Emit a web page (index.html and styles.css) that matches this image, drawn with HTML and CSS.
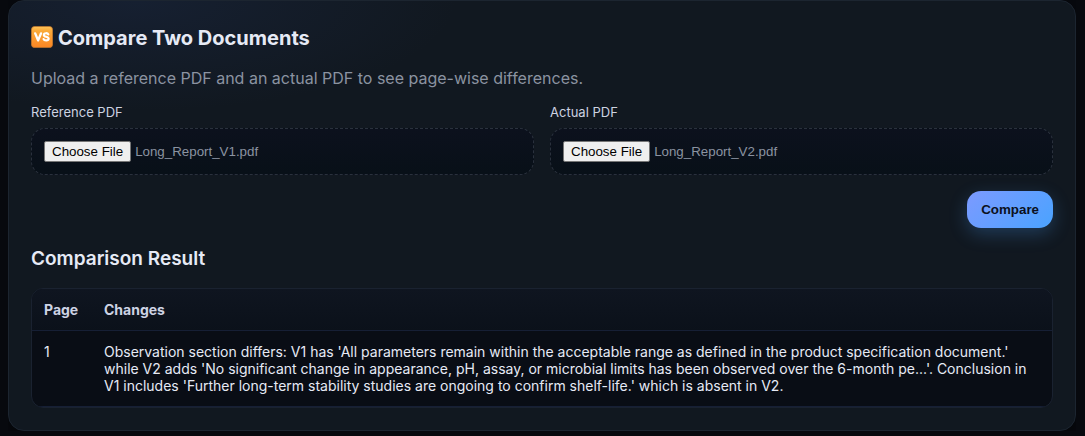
FILE: index.html
```html
<!DOCTYPE html>
<html lang="en">
<head>
<meta charset="utf-8">
<meta name="viewport" content="width=device-width, initial-scale=1">
<title>Compare Two Documents</title>
<link rel="stylesheet" href="styles.css">
</head>
<body>
<main class="card">
  <h2 class="title">
    <svg class="title-icon" viewBox="0 0 22 22" aria-hidden="true">
      <defs>
        <linearGradient id="badge" x1="0" y1="0" x2="0" y2="1">
          <stop offset="0" stop-color="#ffc65a"/>
          <stop offset="0.2" stop-color="#fbab3a"/>
          <stop offset="1" stop-color="#fb8523"/>
        </linearGradient>
      </defs>
      <rect x="0.4" y="0.4" width="21.2" height="21.2" rx="3.4" fill="url(#badge)" stroke="#c97a2c" stroke-width="0.7"/>
      <path d="M4.2 7.4 7.1 14.4 10 7.4" fill="none" stroke="#fff" stroke-width="2.4" stroke-linecap="round" stroke-linejoin="round"/>
      <path d="M17.3 8.4C16.7 6.8 12.9 6.7 12.9 8.9C12.9 11.4 17.6 10.2 17.6 12.7C17.5 15 13.3 14.9 12.6 13.1" fill="none" stroke="#fff" stroke-width="2.2" stroke-linecap="round"/>
    </svg>
    <span>Compare Two Documents</span>
  </h2>
  <p class="lead">Upload a reference PDF and an actual PDF to see page-wise differences.</p>
  <form class="compare-form">
    <div class="fields">
      <div class="field">
        <label class="field-label" for="reference">Reference PDF</label>
        <input class="file-input" id="reference" type="file" accept=".pdf" data-filename="Long_Report_V1.pdf">
      </div>
      <div class="field">
        <label class="field-label" for="actual">Actual PDF</label>
        <input class="file-input" id="actual" type="file" accept=".pdf" data-filename="Long_Report_V2.pdf">
      </div>
    </div>
    <button class="compare-button" type="button">Compare</button>
  </form>
  <h3 class="subtitle">Comparison Result</h3>
  <div class="table-wrap">
    <table class="results">
      <thead>
        <tr><th scope="col">Page</th><th scope="col">Changes</th></tr>
      </thead>
      <tbody>
        <tr>
          <td>1</td>
          <td>Observation section differs: V1 has 'All parameters remain within the acceptable range as defined in the product specification document.' while V2 adds 'No significant change in appearance, pH, assay, or microbial limits has been observed over the 6-month pe...'. Conclusion in V1 includes 'Further long-term stability studies are ongoing to confirm shelf-life.' which is absent in V2.</td>
        </tr>
      </tbody>
    </table>
  </div>
</main>
<script src="script.js"></script>
</body>
</html>
```

FILE: styles.css
```css
* {
  box-sizing: border-box;
}

body {
  margin: 0 9px 0 8px;
  background: #07090e;
  color: #e6eaf5;
  font-family: Inter, "Liberation Sans", sans-serif;
}

.card {
  padding: 22px;
  border: 1px solid #1c2530;
  border-radius: 16px;
  background:
    radial-gradient(ellipse 320px 110px at 12% 0, rgba(40, 60, 110, 0.22), transparent),
    #111820;
  box-shadow: 0 10px 30px rgba(0, 0, 0, 0.35);
}

.title {
  display: flex;
  align-items: center;
  gap: 5px;
  margin: 0 0 15px;
  font-size: 20px;
  line-height: 30px;
  font-weight: 700;
}

.title-icon {
  width: 22px;
  height: 22px;
  margin-bottom: 2px;
}

.lead {
  margin: 0 0 16px;
  color: #8b93a1;
  font-size: 16px;
  line-height: 20px;
}

.compare-form {
  display: flex;
  flex-direction: column;
  gap: 16px;
}

.fields {
  display: grid;
  grid-template-columns: 1fr 1fr;
  gap: 16px;
}

.field {
  display: flex;
  flex-direction: column;
  gap: 8px;
  min-width: 0;
}

.field-label {
  color: #cdd3e0;
  font-size: 13px;
  line-height: 16px;
}

.file-input {
  width: 100%;
  padding: 12px;
  border: 1px dashed #2a313d;
  border-radius: 14px;
  background: linear-gradient(#0c111d, #081018);
  color: #8b93a1;
}

.file-input::file-selector-button {
  margin: 0 4px 0 0;
  padding: 2px 7px;
  border: 1px solid #767676;
  border-radius: 2px;
  background: #efefef;
  color: #000;
  font: inherit;
}

.compare-button {
  align-self: flex-end;
  padding: 10px 14px;
  border: 0;
  border-radius: 14px;
  background: linear-gradient(135deg, #7c9aff, #4aa3ff);
  box-shadow: 0 6px 18px rgba(74, 163, 255, 0.25);
  color: #0b1020;
  font-weight: 700;
  line-height: 17px;
}

.subtitle {
  margin: 18px 0 16px;
  font-size: 19px;
  line-height: 26px;
  font-weight: 600;
}

.table-wrap {
  overflow: hidden;
  border: 1px solid #1a2230;
  border-radius: 12px;
  background: #090d15;
}

.results {
  width: 100%;
  border-collapse: collapse;
  font-size: 14px;
  line-height: 17px;
}

.results th,
.results td {
  padding: 12px;
  border-bottom: 1px solid #161f35;
  text-align: left;
  vertical-align: top;
}

.results th {
  color: #cdd3e4;
  font-weight: 700;
}

.results thead {
  background: linear-gradient(#0f1520, #0b111a);
}

.results th:first-child {
  width: 60px;
}
```

FILE: script.js
```js
document.querySelectorAll('.file-input').forEach((input) => {
  const transfer = new DataTransfer();
  transfer.items.add(new File([''], input.dataset.filename, { type: 'application/pdf' }));
  input.files = transfer.files;
});
```
